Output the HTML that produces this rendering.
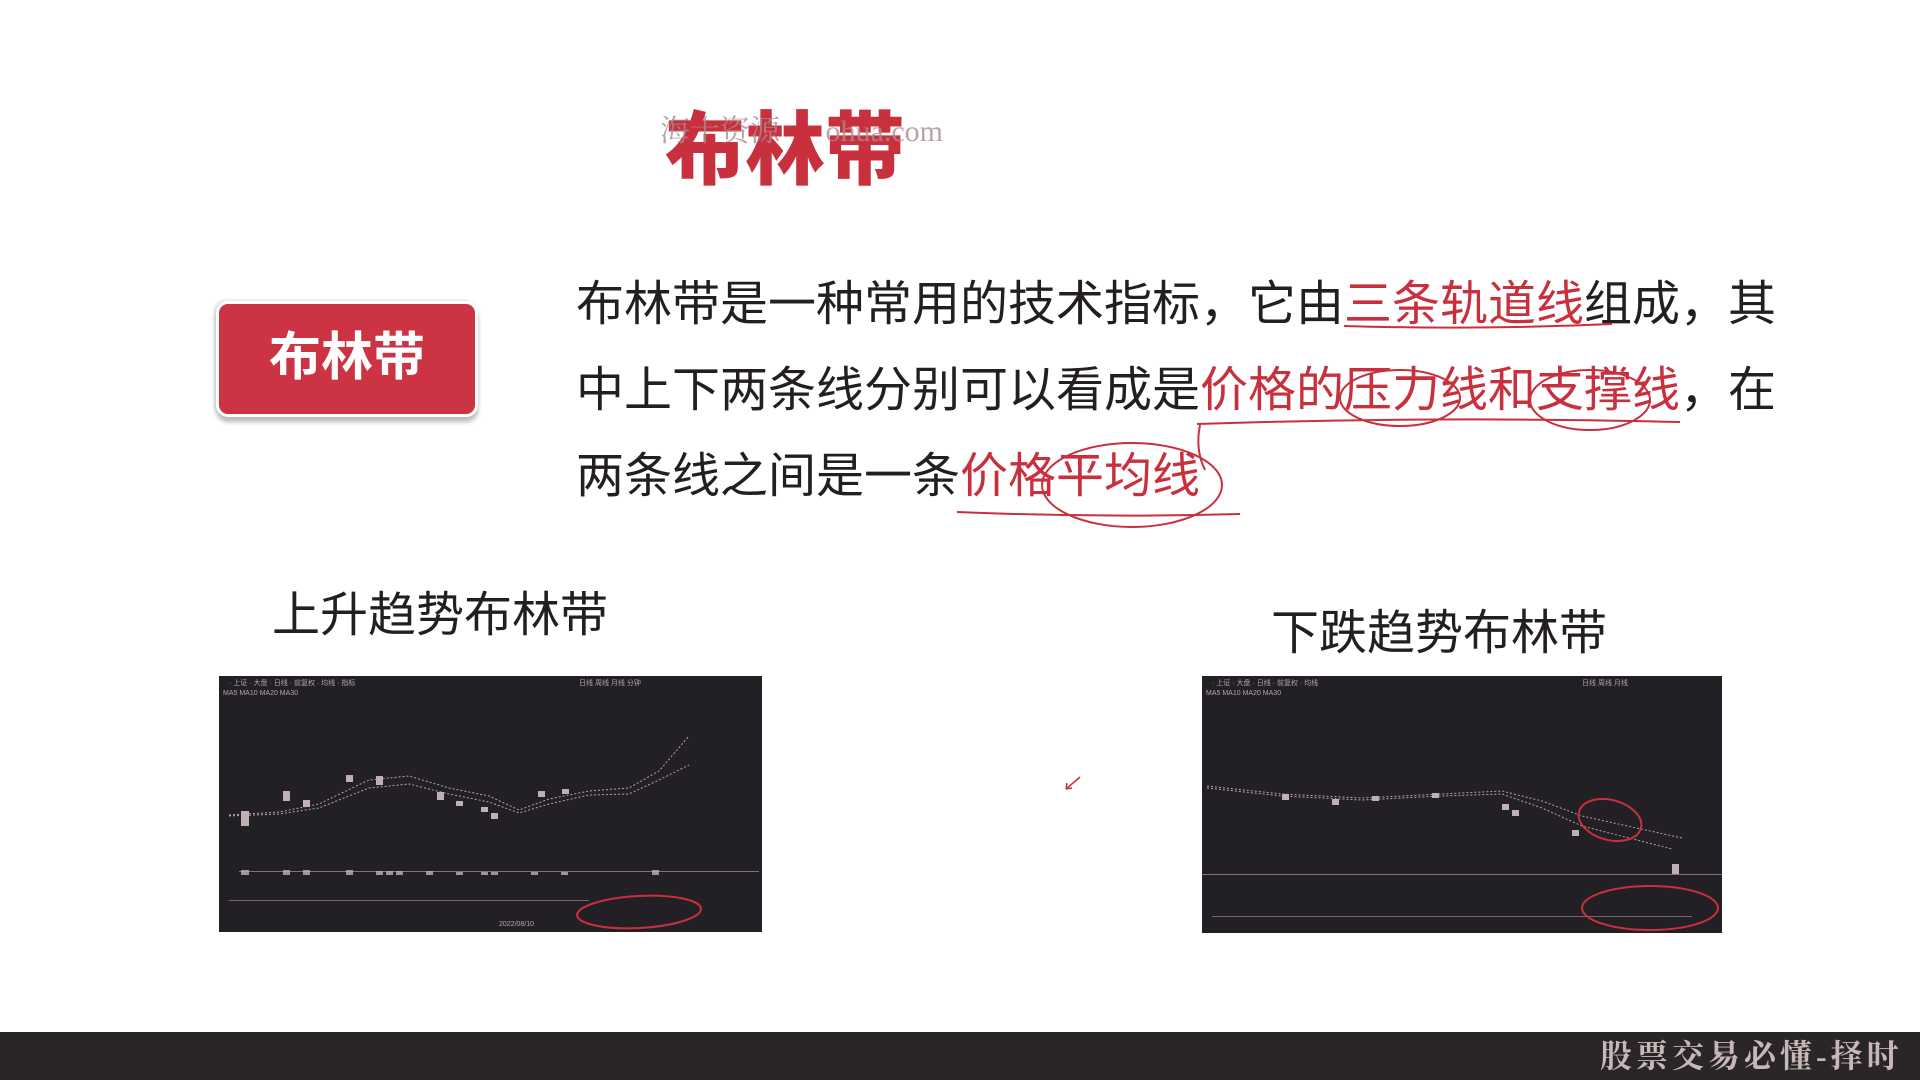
<!DOCTYPE html>
<html><head><meta charset="utf-8"><style>
body{margin:0;width:1920px;height:1080px;background:#fff;position:relative;overflow:hidden;font-family:"Liberation Sans","Noto Sans CJK SC",sans-serif;}
.a{position:absolute;white-space:nowrap}
.r{color:#c9303e}
</style></head><body>
<div class="a" style="left:665px;top:106px;font-size:80px;font-weight:900;color:#c9303e;letter-spacing:0px;line-height:90px">布林带</div>
<div class="a" style="left:660px;top:112px;font-size:30px;color:rgba(170,140,145,.8);font-family:'Liberation Serif','Noto Serif CJK SC',serif;line-height:40px">海十资源 <span style="margin-left:38px">ohua.com</span></div>
<div class="a" style="left:216px;top:301px;width:262px;height:116px;border-radius:12px;background:#cc3443;box-shadow:0 5px 5px #bbb,-2px -1px 3px #ddd;border:3px solid #fff;box-sizing:border-box;color:#fff;font-size:52px;font-weight:bold;text-align:center;line-height:108px">布林带</div>
<div class="a" style="left:576px;top:262px;font-size:48px;line-height:86px;color:#231f20;white-space:normal;width:1210px">布林带是一种常用的技术指标，它由<span class="r">三条轨道线</span>组成，其<br>中上下两条线分别可以看成是<span class="r">价格的压力线和支撑线</span>，在<br>两条线之间是一条<span class="r">价格平均线</span></div>
<svg class="a" style="left:0;top:0" width="1920" height="1080" fill="none" stroke="#c9303e" stroke-width="2">
<path d="M1344 326 Q1480 330 1612 324"/>
<path d="M1197 424 Q1440 416 1680 422"/>
<path d="M1200 425 Q1195 450 1205 470"/>
<ellipse cx="1400" cy="398" rx="60" ry="28"/>
<ellipse cx="1590" cy="400" rx="60" ry="30"/>
<path d="M957 512 Q1100 518 1240 514"/>
<ellipse cx="1132" cy="485" rx="90" ry="42"/>
</svg>
<div class="a" style="left:272px;top:586px;font-size:48px;line-height:60px;color:#231f20">上升趋势布林带</div>
<div class="a" style="left:1271px;top:604px;font-size:48px;line-height:60px;color:#231f20">下跌趋势布林带</div>
<svg class="a" style="left:219px;top:676px" width="543" height="256">
<rect width="543" height="256" fill="#222025"/>
<g fill="#b4a5a8" font-size="7" font-family="Liberation Sans"><text x="10" y="9">· 上证 · 大盘 · 日线 · 前复权 · 均线 · 指标</text><text x="4" y="19">MA5 MA10 MA20 MA30</text><text x="360" y="9">日线 周线 月线 分钟</text><text x="280" y="250">2022/08/10</text></g>
<path d="M10 139 L60 136 L100 128 L150 104 L190 100 L230 112 L270 120 L300 134 L330 123 L370 115 L410 112 L440 95 L470 60" stroke="#b4a5a8" fill="none" stroke-dasharray="2 2"/>
<path d="M10 140 L60 138 L100 132 L150 112 L190 108 L230 118 L270 126 L300 137 L330 128 L370 119 L410 118 L440 104 L470 89" stroke="#b4a5a8" fill="none" stroke-dasharray="2 2"/>
<g fill="#c0b0b3"><rect x="22" y="135" width="8" height="15"/><rect x="64" y="115" width="7" height="10"/><rect x="84" y="124" width="7" height="7"/><rect x="127" y="99" width="7" height="7"/><rect x="157" y="100" width="7" height="9"/><rect x="218" y="116" width="7" height="8"/><rect x="237" y="125" width="7" height="5"/><rect x="262" y="131" width="7" height="5"/><rect x="272" y="137" width="7" height="6"/><rect x="319" y="115" width="7" height="6"/><rect x="343" y="113" width="7" height="5"/>
<rect x="20" y="195" width="520" height="1" opacity=".6"/><rect x="10" y="224" width="360" height="1" opacity=".5"/>
<g opacity=".8"><rect x="22" y="194" width="8" height="5"/><rect x="64" y="194" width="7" height="5"/><rect x="84" y="194" width="7" height="5"/><rect x="127" y="194" width="7" height="5"/><rect x="157" y="195" width="7" height="4"/><rect x="167" y="195" width="7" height="4"/><rect x="177" y="195" width="7" height="4"/><rect x="207" y="195" width="7" height="4"/><rect x="237" y="196" width="7" height="3"/><rect x="262" y="196" width="7" height="3"/><rect x="272" y="196" width="7" height="3"/><rect x="312" y="196" width="7" height="3"/><rect x="342" y="196" width="7" height="3"/><rect x="433" y="194" width="7" height="5"/></g></g>
<ellipse cx="420" cy="236" rx="62" ry="16" stroke="#c9303e" stroke-width="2" fill="none" transform="rotate(-3 420 236)"/>
</svg>
<svg class="a" style="left:1202px;top:676px" width="520" height="257">
<rect width="520" height="257" fill="#222025"/>
<g fill="#b4a5a8" font-size="7" font-family="Liberation Sans"><text x="10" y="9">· 上证 · 大盘 · 日线 · 前复权 · 均线</text><text x="4" y="19">MA5 MA10 MA20 MA30</text><text x="380" y="9">日线 周线 月线</text></g>
<path d="M5 110 L80 118 L160 122 L240 118 L300 115 L340 125 L380 140 L480 162" stroke="#b4a5a8" fill="none" stroke-dasharray="2 2"/>
<path d="M5 112 L80 120 L160 124 L240 120 L300 118 L340 132 L380 150 L470 173" stroke="#b4a5a8" fill="none" stroke-dasharray="2 2"/>
<g fill="#c0b0b3"><rect x="80" y="118" width="7" height="6"/><rect x="130" y="123" width="7" height="6"/><rect x="170" y="120" width="7" height="5"/><rect x="230" y="117" width="7" height="5"/><rect x="300" y="128" width="7" height="6"/><rect x="310" y="134" width="7" height="6"/><rect x="370" y="154" width="7" height="6"/><rect x="470" y="188" width="7" height="10"/>
<rect x="0" y="198" width="520" height="1" opacity=".6"/><rect x="10" y="240" width="480" height="1" opacity=".5"/></g>
<ellipse cx="408" cy="144" rx="32" ry="20" stroke="#c9303e" stroke-width="2" fill="none" transform="rotate(15 408 144)"/>
<ellipse cx="448" cy="232" rx="68" ry="22" stroke="#c9303e" stroke-width="2" fill="none"/>
</svg>
<svg class="a" style="left:1064px;top:774px" width="20" height="18"><path d="M2 15 L16 3 M2 15 L8 14 M2 15 L3 9" stroke="#c9303e" stroke-width="1.5" fill="none"/></svg>
<div class="a" style="left:0;top:1032px;width:1920px;height:48px;background:#2a2627"></div>
<div class="a" style="left:1600px;top:1036px;font-size:32px;line-height:40px;color:#c7b7b8;letter-spacing:4px;font-weight:bold;font-family:'Liberation Serif','Noto Serif CJK SC',serif">股票交易必懂-择时</div>
</body></html>
